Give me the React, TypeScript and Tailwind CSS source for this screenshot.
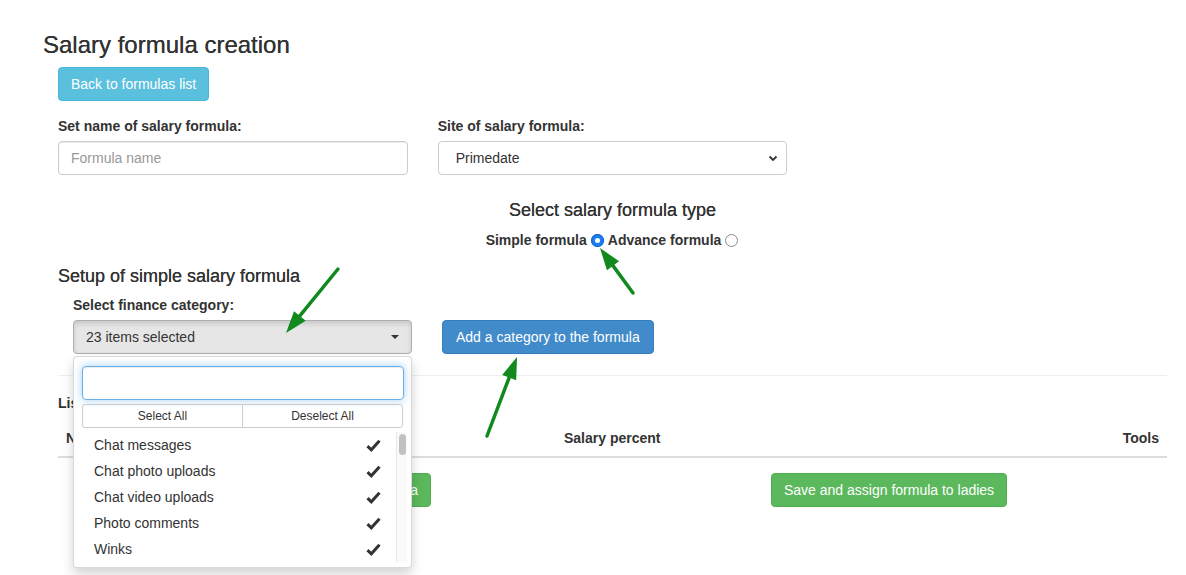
import React from "react";

const categories = [
  "Chat messages",
  "Chat photo uploads",
  "Chat video uploads",
  "Photo comments",
  "Winks",
];

function Arrow({ x1, y1, x2, y2 }: { x1: number; y1: number; x2: number; y2: number }) {
  const dx = x2 - x1;
  const dy = y2 - y1;
  const len = Math.hypot(dx, dy);
  const ux = dx / len;
  const uy = dy / len;
  const head = 22;
  const half = 7.5;
  const bx = x2 - ux * head;
  const by = y2 - uy * head;
  const pts = `${x2},${y2} ${bx - uy * half},${by + ux * half} ${bx + uy * half},${by - ux * half}`;
  return (
    <g>
      <line x1={x1} y1={y1} x2={bx + ux * 2} y2={by + uy * 2} stroke="#11891d" strokeWidth={3.5} strokeLinecap="round" />
      <polygon points={pts} fill="#11891d" />
    </g>
  );
}

function CheckIcon() {
  return (
    <svg width="15" height="13" viewBox="0 0 15 13">
      <path d="M1.5 7.2 L5.3 10.8 L13.5 1.8" fill="none" stroke="#333" strokeWidth="3" strokeLinejoin="miter" />
    </svg>
  );
}

function Radio({ checked }: { checked?: boolean }) {
  if (checked) {
    return (
      <span className="mx-[4px] inline-flex h-[13px] w-[13px] items-center justify-center rounded-full bg-[#1c7cf2] shadow-[inset_0_0_0_1px_#1565c9]">
        <span className="h-[5px] w-[5px] rounded-full bg-white" />
      </span>
    );
  }
  return <span className="mx-[4px] inline-block h-[13px] w-[13px] rounded-full border border-[#8a8a8a] bg-white" />;
}

function CategoryMenu() {
  return (
    <div className="absolute left-0 top-[36px] z-10 h-[212px] w-[339px] rounded-[4px] border border-black/15 bg-white shadow-[0_6px_12px_rgba(0,0,0,0.175)]">
      <div className="px-[8px] pt-[9px]">
        <div className="h-[34px] w-[322px] rounded-[4px] border border-[#66afe9] shadow-[inset_0_1px_1px_rgba(0,0,0,0.075),0_0_8px_rgba(102,175,233,0.6)]" />
        <div className="mt-[4px] flex h-[24px] w-[321px] text-[12px] text-[#333]">
          <div className="flex flex-1 items-center justify-center rounded-l-[3px] border border-[#ccc]">Select All</div>
          <div className="-ml-px flex flex-1 items-center justify-center rounded-r-[3px] border border-[#ccc]">Deselect All</div>
        </div>
      </div>
      <div className="mt-[4px] flex">
        <ul className="w-[322px]">
          {categories.map((c) => (
            <li key={c} className="flex h-[26px] items-center justify-between pl-[20px] pr-[15px] text-[14px] text-[#333]">
              <span>{c}</span>
              <CheckIcon />
            </li>
          ))}
        </ul>
        <div className="h-[130px] w-[11px] border-l border-[#e8e8e8] bg-[#fafafa] pl-[2px] pt-[2px]">
          <div className="h-[21px] w-[7px] rounded-full bg-[#c1c1c1]" />
        </div>
      </div>
    </div>
  );
}

export default function App() {
  return (
    <div className="relative h-[575px] w-[1186px] overflow-hidden bg-white font-['Liberation_Sans',Arial,sans-serif] text-[14px] leading-[20px] text-[#333]">
      <div className="pl-[43px] pr-[4px] pt-[32px]">
        <h3 className="text-[24px] leading-[26px] font-medium [text-shadow:0_0_0.4px_#333]">Salary formula creation</h3>

        <div className="px-[15px]">
          <button className="mt-[9px] h-[34px] rounded-[4px] border border-[#46b8da] bg-[#5bc0de] px-[12px] text-white">
            Back to formulas list
          </button>

          <div className="mt-[15px] grid grid-cols-3 gap-x-[30px]">
            <div>
              <label className="block font-bold">Set name of salary formula:</label>
              <div className="mt-[5px] flex h-[34px] items-center rounded-[4px] border border-[#ccc] px-[12px] text-[#999] shadow-[inset_0_1px_1px_rgba(0,0,0,0.075)]">
                Formula name
              </div>
            </div>
            <div>
              <label className="block font-bold">Site of salary formula:</label>
              <div className="mt-[5px] flex h-[34px] items-center justify-between rounded-[4px] border border-[#ccc] pl-[17px] pr-[8px] text-[#333]">
                <span>Primedate</span>
                <svg width="10" height="7" viewBox="0 0 10 7">
                  <path d="M1.5 1.5 L5 5 L8.5 1.5" fill="none" stroke="#333" strokeWidth="1.8" />
                </svg>
              </div>
            </div>
          </div>

          <div className="mt-[25px] text-center">
            <h4 className="text-[18px] leading-[20px] font-medium [text-shadow:0_0_0.3px_#333]">Select salary formula type</h4>
            <div className="mt-[10px] flex items-center justify-center pl-[3px] font-bold">
              <span>Simple formula</span>
              <Radio checked />
              <span>Advance formula</span>
              <Radio />
            </div>
          </div>

          <h4 className="mt-[16px] text-[18px] leading-[20px] font-medium [text-shadow:0_0_0.3px_#333]">Setup of simple salary formula</h4>

          <div className="mt-[9px] px-[15px]">
            <label className="block font-bold">Select finance category:</label>
            <div className="mt-[5px] flex items-start gap-[30px]">
              <div className="relative">
                <div className="flex h-[34px] w-[339px] items-center justify-between rounded-[4px] border border-[#adadad] bg-[#e6e6e6] pl-[12px] pr-[12px] shadow-[inset_0_3px_5px_rgba(0,0,0,0.125)]">
                  <span>23 items selected</span>
                  <span className="h-0 w-0 border-x-[4px] border-t-[4px] border-x-transparent border-t-[#333]" />
                </div>
                <CategoryMenu />
              </div>
              <button className="h-[34px] rounded-[4px] border border-[#357ebd] bg-[#428bca] px-[13px] text-white">
                Add a category to the formula
              </button>
            </div>
          </div>

          <hr className="mt-[21px] border-t border-[#eee]" />

          <div className="mt-[17px] font-bold">List</div>

          <div className="mt-[7px] grid grid-cols-[498px_1fr_auto] border-b-2 border-[#ddd] font-bold">
            <div className="p-[8px]">No.</div>
            <div className="p-[8px]">Salary percent</div>
            <div className="p-[8px]">Tools</div>
          </div>

          <div className="mt-[15px] flex">
            <div className="flex w-[373px] justify-end">
              <button className="h-[34px] rounded-[4px] border border-[#4cae4c] bg-[#5cb85c] px-[12px] text-white">
                Save formula
              </button>
            </div>
            <button className="ml-[340px] h-[34px] rounded-[4px] border border-[#4cae4c] bg-[#5cb85c] px-[12px] text-white">
              Save and assign formula to ladies
            </button>
          </div>
        </div>
      </div>

      <svg className="pointer-events-none absolute inset-0 z-20" width="1186" height="575">
        <Arrow x1={338} y1={269} x2={286} y2={333} />
        <Arrow x1={633} y1={293} x2={600} y2={248} />
        <Arrow x1={487} y1={436} x2={517} y2={357} />
      </svg>
    </div>
  );
}
